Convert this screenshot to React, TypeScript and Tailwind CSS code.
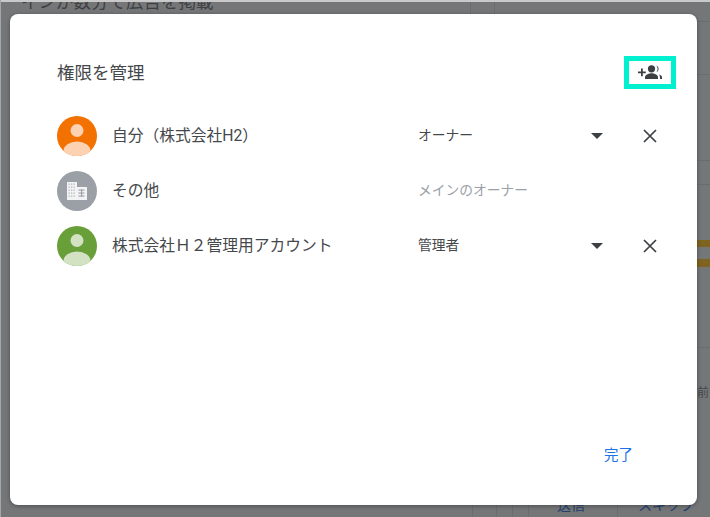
const FONT = "font-['Roboto','Noto_Sans_CJK_JP',sans-serif]";

function PersonAvatar({ bg, fg }: { bg: string; fg: string }) {
    return (
        <svg width="40" height="40" viewBox="0 0 40 40" className="shrink-0">
            <defs>
                <clipPath id={`clip-${bg}`}>
                    <circle cx="20" cy="20" r="20" />
                </clipPath>
            </defs>
            <circle cx="20" cy="20" r="20" fill={bg} />
            <circle cx="20" cy="14.5" r="6.5" fill={fg} />
            <ellipse cx="20" cy="35" rx="13.5" ry="9.5" fill={fg} clipPath={`url(#clip-${bg})`} />
        </svg>
    );
}

function BuildingAvatar() {
    return (
        <svg width="40" height="40" viewBox="0 0 40 40" className="shrink-0">
            <circle cx="20" cy="20" r="20" fill="#9aa0a6" />
            <path d="M10 11h10v5h10v13H10z" fill="#f1f3f4" />
            <g fill="#b4b8bc">
                {[12.5, 15.5, 18.5, 21.5, 24.5].map((y) =>
                    [11.5, 14, 16.5].map((x) => <rect key={`${x}-${y}`} x={x} y={y} width="1.3" height="1.3" />),
                )}
            </g>
            <g fill="#9aa0a6">
                <rect x="21.5" y="18.5" width="6" height="1.1" />
                <rect x="21.5" y="21.5" width="6" height="1.1" />
                <rect x="21.5" y="24.5" width="6" height="1.1" />
                <rect x="24" y="18.5" width="1.1" height="7" />
            </g>
        </svg>
    );
}

function Caret() {
    return (
        <svg width="12" height="6" viewBox="0 0 12 6" className="shrink-0">
            <path d="M0 0h12L6 6z" fill="#3c4043" />
        </svg>
    );
}

function Close() {
    return (
        <svg width="14" height="14" viewBox="0 0 14 14" className="shrink-0">
            <path d="M1 1l12 12M13 1L1 13" stroke="#3c4043" strokeWidth="1.7" fill="none" />
        </svg>
    );
}

function AddPeople() {
    return (
        <svg width="24" height="16" viewBox="0 0 24 16">
            <path d="M0 6.5h3v-3h1.8v3h3v1.8h-3v3H3v-3H0z" fill="#3c4043" />
            <circle cx="13.5" cy="3.8" r="3.6" fill="#3c4043" />
            <path d="M7 14v-1.8c0-2.6 4.5-3.9 6.5-3.9s6.5 1.3 6.5 3.9V14z" fill="#3c4043" />
            <path d="M18.4.4a3.7 3.7 0 0 1 0 6.8 5.8 5.8 0 0 0 0-6.8zM21 9.6c1.6.5 3 1.3 3 2.8V14h-2v-1.6c0-1-.4-2-1-2.8z" fill="#3c4043" />
        </svg>
    );
}

// the page behind the dialog, dimmed by the scrim
function Backdrop() {
    return (
        <div className="absolute inset-0 flex flex-col overflow-hidden border-l border-[#a5a6a7] bg-[#757678]">
            <div className="h-[2px] bg-[#c9c9ca]" />
            <div className="flex h-[12px] items-end overflow-hidden pl-[20px]">
                <div className="w-[449px] shrink-0 text-[17.5px] leading-[24px] text-[#3f4042]">インが数分で広告を掲載</div>
                <div className="h-[12px] w-[25px] border-x border-[#6b6c6e]" />
            </div>
            <div className="flex flex-1 justify-end">
                <div className="flex w-[13px] flex-col text-[12px] text-[#48494b]">
                    <div className="h-[8px] border-b border-[#6b6c6e]" />
                    <div className="h-[53px] border-b border-[#6b6c6e]" />
                    <div className="h-[86px] border-b border-[#6b6c6e]" />
                    <div className="h-[24px] border-b border-[#6b6c6e]" />
                    <div className="mt-[55px] h-[7px] bg-[#7f6420]" />
                    <div className="mt-[12px] h-[8px] bg-[#7f6420]" />
                    <div className="h-[81px] border-b border-[#6b6c6e]" />
                    <div className="mt-[37px] leading-[16px]">前</div>
                </div>
            </div>
            <div className="flex h-[12px] overflow-hidden pl-[471px] text-[14px] leading-[16px] text-[#24406f]">
                <div className="h-[12px] w-[25px] border-x border-[#6b6c6e]" />
                <div className="h-[12px] w-[16px] border-r border-[#6b6c6e]" />
                <div className="h-[12px] w-[16px] border-r border-[#6b6c6e]" />
                <div className="-mt-[8px] w-[88px] pl-[28px]">送信</div>
                <div className="h-[12px] w-px bg-[#6b6c6e]" />
                <div className="-mt-[8px] pl-[20px] whitespace-nowrap">スキップ</div>
            </div>
        </div>
    );
}

type Row = {
    name: string;
    avatar: React.ReactNode;
    role: string;
    muted?: boolean;
};

const ROWS: Row[] = [
    { name: "自分（株式会社H2）", avatar: <PersonAvatar bg="#f27100" fg="#fcd2b3" />, role: "オーナー" },
    { name: "その他", avatar: <BuildingAvatar />, role: "メインのオーナー", muted: true },
    { name: "株式会社Ｈ２管理用アカウント", avatar: <PersonAvatar bg="#689f38" fg="#d2e2c3" />, role: "管理者" },
];

export default function App() {
    return (
        <div className={`${FONT} relative h-[517px] w-[710px] overflow-hidden`}>
            <Backdrop />
            <div className="relative pt-[14px] pl-[10px]">
                <div className="flex h-[491px] w-[687px] flex-col rounded-[8px] bg-white text-[#45484b] shadow-[0_1px_4px_rgba(0,0,0,0.35)]">
                    <div className="flex items-start justify-between pt-[42px] pr-[21px] pl-[47px]">
                        <div className="text-[17.5px] leading-[34px]">権限を管理</div>
                        <div className="flex h-[33px] w-[52px] items-center justify-center border-[5px] border-[#00f0d0]">
                            <AddPeople />
                        </div>
                    </div>
                    <div className="mt-[18px] flex flex-col">
                        {ROWS.map((row) => (
                            <div key={row.name} className="flex h-[55px] items-center pl-[47px]">
                                {row.avatar}
                                <div className="ml-[15px] w-[306px] text-[15.75px]">{row.name}</div>
                                <div className={`w-[173px] text-[13.75px] ${row.muted ? "text-[#9aa0a6]" : ""}`}>{row.role}</div>
                                {!row.muted && (
                                    <div className="flex items-center">
                                        <Caret />
                                        <div className="ml-[40px]">
                                            <Close />
                                        </div>
                                    </div>
                                )}
                            </div>
                        ))}
                    </div>
                    <div className="mt-auto flex justify-end pr-[64px] pb-[38px]">
                        <div className="text-[14.5px] text-[#1a73e8]">完了</div>
                    </div>
                </div>
            </div>
        </div>
    );
}
